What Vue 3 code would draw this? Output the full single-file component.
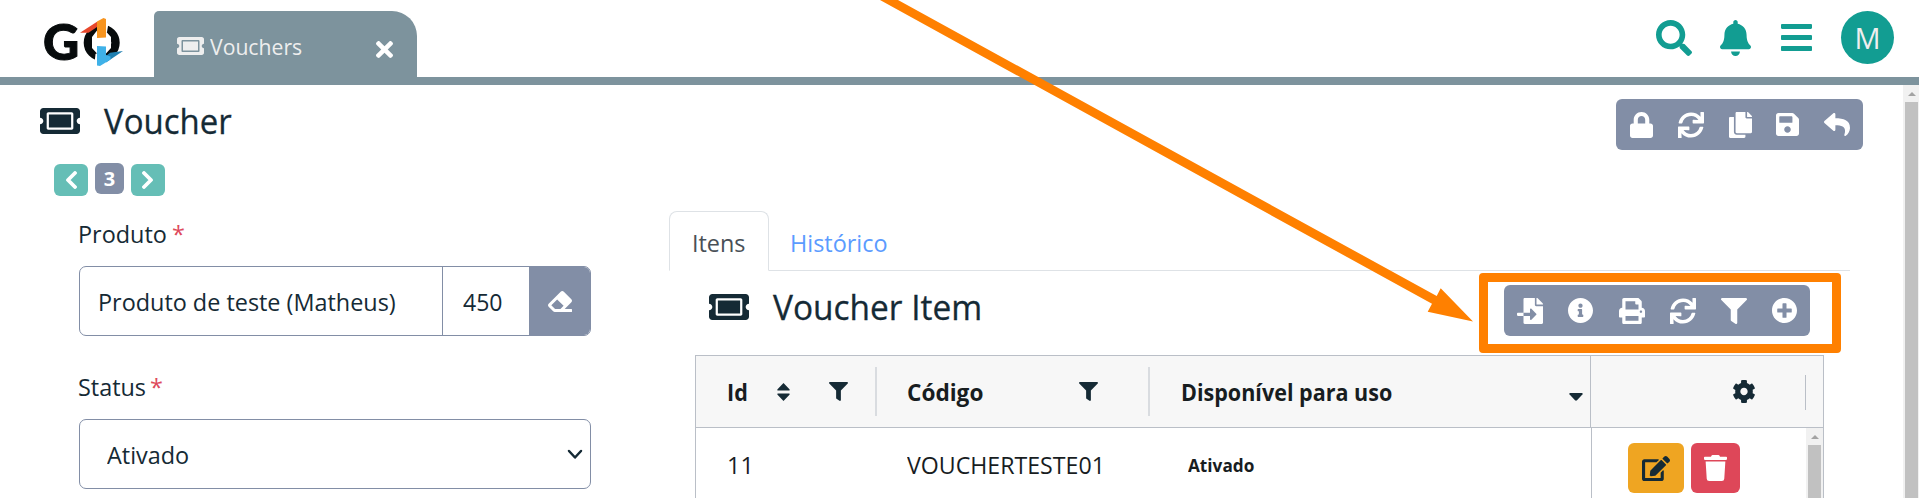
<script setup>
import { h } from 'vue'

const paths = {
  ticket: ['0 64 576 384', 'M128 160h320v192H128V160zm400 96c0 26.51 21.49 48 48 48v96c0 26.51-21.49 48-48 48H48c-26.51 0-48-21.49-48-48v-96c26.51 0 48-21.49 48-48s-21.49-48-48-48v-96c0-26.51 21.49-48 48-48h480c26.51 0 48 21.49 48 48v96c-26.51 0-48 21.49-48 48zm-48-104c0-13.255-10.745-24-24-24H120c-13.255 0-24 10.745-24 24v208c0 13.255 10.745 24 24 24h336c13.255 0 24-10.745 24-24V152z'],
  times: ['0 80 352 352', 'M242.72 256l100.07-100.07c12.28-12.28 12.28-32.19 0-44.48l-22.24-22.24c-12.28-12.28-32.19-12.28-44.48 0L176 189.28 75.93 89.21c-12.28-12.28-32.19-12.28-44.48 0L9.21 111.45c-12.28 12.28-12.28 32.19 0 44.48L109.28 256 9.21 356.07c-12.28 12.28-12.28 32.19 0 44.48l22.24 22.24c12.28 12.28 32.2 12.28 44.48 0L176 322.72l100.07 100.07c12.28 12.28 32.2 12.28 44.48 0l22.24-22.24c12.28-12.28 12.28-32.19 0-44.48L242.72 256z'],
  search: ['0 0 512 512', 'M505 442.7L405.3 343c-4.5-4.5-10.6-7-17-7H372c27.6-35.3 44-79.7 44-128C416 93.1 322.9 0 208 0S0 93.1 0 208s93.1 208 208 208c48.3 0 92.7-16.4 128-44v16.3c0 6.4 2.5 12.5 7 17l99.7 99.7c9.4 9.4 24.6 9.4 33.9 0l28.3-28.3c9.4-9.4 9.4-24.6.1-34zM208 336c-70.7 0-128-57.2-128-128 0-70.7 57.2-128 128-128 70.7 0 128 57.2 128 128 0 70.7-57.2 128-128 128z'],
  bell: ['0 0 448 512', 'M224 512c35.32 0 63.97-28.65 63.97-64H160.03c0 35.35 28.65 64 63.97 64zm215.39-149.71c-19.32-20.76-55.47-51.99-55.47-154.29 0-77.7-54.48-139.9-127.94-155.16V32c0-17.67-14.32-32-31.98-32s-31.98 14.33-31.98 32v20.84C118.56 68.1 64.08 130.3 64.08 208c0 102.3-36.15 133.53-55.47 154.29-6 6.45-8.66 14.16-8.61 21.71.11 16.4 12.98 32 32.1 32h383.8c19.12 0 32-15.6 32.1-32 .05-7.55-2.61-15.27-8.61-21.71z'],
  bars: ['0 60 448 392', 'M16 132h416c8.837 0 16-7.163 16-16V76c0-8.837-7.163-16-16-16H16C7.163 60 0 67.163 0 76v40c0 8.837 7.163 16 16 16zm0 160h416c8.837 0 16-7.163 16-16v-40c0-8.837-7.163-16-16-16H16c-8.837 0-16 7.163-16 16v40c0 8.837 7.163 16 16 16zm0 160h416c8.837 0 16-7.163 16-16v-40c0-8.837-7.163-16-16-16H16c-8.837 0-16 7.163-16 16v40c0 8.837 7.163 16 16 16z'],
  lock: ['0 0 448 512', 'M400 224h-24v-72C376 68.2 307.8 0 224 0S72 68.2 72 152v72H48c-26.5 0-48 21.5-48 48v192c0 26.5 21.5 48 48 48h352c26.5 0 48-21.5 48-48V272c0-26.5-21.5-48-48-48zm-104 0H152v-72c0-39.7 32.3-72 72-72s72 32.3 72 72v72z'],
  sync: ['0 0 512 512', 'M440.65 12.57l4 82.77A247.16 247.16 0 0 0 255.83 8C134.73 8 33.91 94.92 12.29 209.82A12 12 0 0 0 24.09 224h49.05a12 12 0 0 0 11.67-9.26 175.91 175.91 0 0 1 317-56.94l-101.46-4.86a12 12 0 0 0-12.57 12v47.41a12 12 0 0 0 12 12H500a12 12 0 0 0 12-12V12a12 12 0 0 0-12-12h-47.37a12 12 0 0 0-11.98 12.57zM255.83 432a175.61 175.61 0 0 1-146-77.8l101.8 4.87a12 12 0 0 0 12.57-12v-47.4a12 12 0 0 0-12-12H12a12 12 0 0 0-12 12V500a12 12 0 0 0 12 12h47.35a12 12 0 0 0 12-12.6l-4.15-82.57A247.17 247.17 0 0 0 255.83 504c121.11 0 221.93-86.92 243.55-201.82a12 12 0 0 0-11.8-14.18h-49.05a12 12 0 0 0-11.67 9.26A175.86 175.86 0 0 1 255.83 432z'],
  copy: ['0 0 448 512', 'M320 448v40c0 13.255-10.745 24-24 24H24c-13.255 0-24-10.745-24-24V120c0-13.255 10.745-24 24-24h72v296c0 30.879 25.121 56 56 56h168zm0-344V0H152c-13.255 0-24 10.745-24 24v368c0 13.255 10.745 24 24 24h272c13.255 0 24-10.745 24-24V128H344c-13.2 0-24-10.8-24-24zm120.971-31.029L375.029 7.029A24 24 0 0 0 358.059 0H352v96h96v-6.059a24 24 0 0 0-7.029-16.97z'],
  save: ['0 32 448 448', 'M433.941 129.941l-83.882-83.882A48 48 0 0 0 316.118 32H48C21.49 32 0 53.49 0 80v352c0 26.51 21.49 48 48 48h352c26.51 0 48-21.49 48-48V163.882a48 48 0 0 0-14.059-33.941zM224 416c-35.346 0-64-28.654-64-64 0-35.346 28.654-64 64-64s64 28.654 64 64c0 35.346-28.654 64-64 64zm96-304.52V212c0 6.627-5.373 12-12 12H76c-6.627 0-12-5.373-12-12V108c0-6.627 5.373-12 12-12h228.52c3.183 0 6.235 1.264 8.485 3.515l3.48 3.48A11.996 11.996 0 0 1 320 111.48z'],
  reply: ['0 32 512 448', 'M8.309 189.836L184.313 37.851C199.719 24.546 224 35.347 224 56.015v80.053c160.629 1.839 288 34.032 288 186.258 0 61.441-39.581 122.309-83.333 154.132-13.653 9.931-33.111-2.533-28.077-18.631 45.344-145.012-21.507-183.51-176.59-185.742V360c0 20.7-24.3 31.453-39.687 18.164l-176.004-152c-11.071-9.562-11.086-26.753 0-36.328z'],
  import: ['0 0 512 512', 'M16 288c-8.8 0-16 7.2-16 16v32c0 8.8 7.2 16 16 16h112v-64zm489-183L407.1 7c-4.5-4.5-10.6-7-17-7H384v128h128v-6.1c0-6.3-2.5-12.4-7-16.9zm-153 31V0H152c-13.3 0-24 10.7-24 24v264h128v-65.2c0-14.3 17.3-21.4 27.4-11.3L379 308c6.6 6.7 6.6 17.4 0 24l-95.7 96.4c-10.1 10.1-27.4 3-27.4-11.3V352H128v136c0 13.3 10.7 24 24 24h336c13.3 0 24-10.7 24-24V160H376c-13.2 0-24-10.8-24-24z'],
  info: ['8 8 496 496', 'M256 8C119.043 8 8 119.083 8 256c0 136.997 111.043 248 248 248s248-111.003 248-248C504 119.083 392.957 8 256 8zm0 110c23.196 0 42 18.804 42 42s-18.804 42-42 42-42-18.804-42-42 18.804-42 42-42zm56 254c0 6.627-5.373 12-12 12h-88c-6.627 0-12-5.373-12-12v-24c0-6.627 5.373-12 12-12h12v-64h-12c-6.627 0-12-5.373-12-12v-24c0-6.627 5.373-12 12-12h64c6.627 0 12 5.373 12 12v100h12c6.627 0 12 5.373 12 12v24z'],
  print: ['0 0 512 512', 'M448 192V77.25c0-8.49-3.37-16.62-9.37-22.63L393.37 9.37c-6-6-14.14-9.37-22.63-9.37H96C78.33 0 64 14.33 64 32v160c-35.35 0-64 28.65-64 64v112c0 8.84 7.16 16 16 16h48v96c0 17.67 14.33 32 32 32h320c17.67 0 32-14.33 32-32v-96h48c8.84 0 16-7.16 16-16V256c0-35.35-28.65-64-64-64zm-64 256H128v-96h256v96zm0-224H128V64h192v48c0 8.84 7.16 16 16 16h48v96zm48 72c-13.25 0-24-10.75-24-24 0-13.26 10.75-24 24-24s24 10.74 24 24c0 13.25-10.75 24-24 24z'],
  filter: ['0 0 512 512', 'M487.976 0H24.028C2.71 0-8.047 25.866 7.058 40.971L192 225.941V432c0 7.831 3.821 15.17 10.237 19.662l80 55.98C298.02 518.69 320 507.493 320 487.98V225.941l184.947-184.97C520.021 25.896 509.338 0 487.976 0z'],
  plus: ['8 8 496 496', 'M256 8C119 8 8 119 8 256s111 248 248 248 248-111 248-248S393 8 256 8zm144 276c0 6.6-5.4 12-12 12h-92v92c0 6.6-5.4 12-12 12h-56c-6.6 0-12-5.4-12-12v-92h-92c-6.6 0-12-5.4-12-12v-56c0-6.6 5.4-12 12-12h92v-92c0-6.6 5.4-12 12-12h56c6.6 0 12 5.4 12 12v92h92c6.6 0 12 5.4 12 12v56z'],
  cog: ['16 8 480 496', 'M487.4 315.7l-42.6-24.6c4.3-23.2 4.3-47 0-70.2l42.6-24.6c4.9-2.8 7.1-8.6 5.5-14-11.1-35.6-30-67.8-54.7-94.6-3.8-4.1-10-5.1-14.8-2.3L380.8 110c-17.9-15.4-38.5-27.3-60.8-35.1V25.8c0-5.6-3.9-10.5-9.4-11.7-36.7-8.2-74.3-7.8-109.2 0-5.5 1.2-9.4 6.1-9.4 11.7V75c-22.2 7.9-42.8 19.8-60.8 35.1L88.7 85.5c-4.9-2.8-11-1.9-14.8 2.3-24.7 26.7-43.6 58.9-54.7 94.6-1.7 5.4.6 11.2 5.5 14L67.3 221c-4.3 23.2-4.3 47 0 70.2l-42.6 24.6c-4.9 2.8-7.1 8.6-5.5 14 11.1 35.6 30 67.8 54.7 94.6 3.8 4.1 10 5.1 14.8 2.3l42.6-24.6c17.9 15.4 38.5 27.3 60.8 35.1v49.2c0 5.6 3.9 10.5 9.4 11.7 36.7 8.2 74.3 7.8 109.2 0 5.5-1.2 9.4-6.1 9.4-11.7v-49.2c22.2-7.9 42.8-19.8 60.8-35.1l42.6 24.6c4.9 2.8 11 1.9 14.8-2.3 24.7-26.7 43.6-58.9 54.7-94.6 1.5-5.5-.7-11.3-5.6-14.1zM256 336c-44.1 0-80-35.9-80-80s35.9-80 80-80 80 35.9 80 80-35.9 80-80 80z'],
  eraser: ['0 32 512 448', 'M497.941 273.941c18.745-18.745 18.745-49.137 0-67.882l-160-160c-18.745-18.745-49.136-18.746-67.883 0l-256 256c-18.745 18.745-18.745 49.137 0 67.882l96 96A48.004 48.004 0 0 0 144 480h356c6.627 0 12-5.373 12-12v-40c0-6.627-5.373-12-12-12H355.883l142.058-142.059zm-302.627-62.627l137.373 137.373L265.373 416H150.628l-80-80 124.686-124.686z'],
  edit: ['0 0 576 512', 'M402.6 83.2l90.2 90.2c3.8 3.8 3.8 10 0 13.8L274.4 405.6l-92.8 10.3c-12.4 1.4-22.9-9.1-21.5-21.5l10.3-92.8L388.8 83.2c3.8-3.8 10-3.8 13.8 0zm162-22.9l-48.8-48.8c-15.2-15.2-39.9-15.2-55.2 0l-35.4 35.4c-3.8 3.8-3.8 10 0 13.8l90.2 90.2c3.8 3.8 10 3.8 13.8 0l35.4-35.4c15.2-15.3 15.2-40 0-55.2zM384 346.2V448H64V128h229.8c3.2 0 6.2-1.3 8.5-3.5l40-40c7.6-7.6 2.2-20.5-8.5-20.5H48C21.5 64 0 85.5 0 112v352c0 26.5 21.5 48 48 48h352c26.5 0 48-21.5 48-48V306.2c0-10.7-12.9-16-20.5-8.5l-40 40c-2.2 2.3-3.5 5.3-3.5 8.5z'],
  trash: ['0 0 448 512', 'M432 32H312l-9.4-18.7A24 24 0 0 0 281.1 0H166.8a23.72 23.72 0 0 0-21.4 13.3L136 32H16A16 16 0 0 0 0 48v32a16 16 0 0 0 16 16h416a16 16 0 0 0 16-16V48a16 16 0 0 0-16-16zM53.2 467a48 48 0 0 0 47.9 45h245.8a48 48 0 0 0 47.9-45L416 128H32z'],
}

const Icon = (props) =>
  h('svg', { viewBox: paths[props.name][0], width: props.w, height: props.h, preserveAspectRatio: 'none', fill: 'currentColor' },
    [h('path', { d: paths[props.name][1] })])
Icon.props = ['name', 'w', 'h']

const pageActions = [
  ['lock', 23, 26], ['sync', 26, 26], ['copy', 23, 26], ['save', 23, 23], ['reply', 26, 23],
]
const gridActions = [
  ['import', 26, 26], ['info', 25, 25], ['print', 26, 26], ['sync', 26, 26], ['filter', 26, 26], ['plus', 25, 25],
]
</script>

<template>
  <div class="page">
    <header class="topbar">
      <div class="logo">
        <span class="logo-letter">G</span>
        <svg class="logo-ring" viewBox="36 0 46 52" width="46" height="52">
          <circle cx="58.700" cy="24.700" r="13.800" fill="none" stroke="#070b0c" stroke-width="8.400" />
          <path d="M63 5h2.500l-1.500 9-1 1zM51.500 45l1-9 2-1v12z" fill="#fff" />
          <path d="M54 12.500V20l9-.5v-6l5 5.500v11l-5 5.500v-7l-9-.5v7.500L49 30V19z" fill="#fff" />
          <path d="M37 14.700L54 3.700V9l-8.500 5.700z" fill="#e8472b" />
          <path d="M54 3.500L60.500 0 63 1v18.500l-9 .5z" fill="#f7941f" />
          <path d="M67 34.700L80 33 63 44.500V38z" fill="#1f7fb0" />
          <path d="M54 28l9 .5V37l4.500 1.500v3L57 48l-3-.5z" fill="#3fb1e8" />
        </svg>
      </div>
      <div class="tab">
        <Icon name="ticket" w="27" h="18" />
        <span class="t tab-name">Vouchers</span>
        <Icon class="tab-close" name="times" w="17" h="17" />
      </div>
      <nav class="top-icons">
        <Icon name="search" w="36" h="36" />
        <Icon class="bell" name="bell" w="31" h="36" />
        <Icon class="bars" name="bars" w="31" h="27" />
        <div class="avatar">M</div>
      </nav>
    </header>

    <div class="body">
      <main class="content">
        <div class="title-row">
          <Icon name="ticket" w="40" h="26" />
          <h1 class="t">Voucher</h1>
          <div class="toolbar page-tools">
            <Icon v-for="a in pageActions" :key="a[0]" :name="a[0]" :w="a[1]" :h="a[2]" />
          </div>
        </div>

        <div class="pager">
          <button class="step"><svg width="12" height="18" viewBox="0 0 12 18"><path d="M10 2L3 9l7 7" /></svg></button>
          <span class="count">3</span>
          <button class="step"><svg width="12" height="18" viewBox="0 0 12 18"><path d="M2 2l7 7-7 7" /></svg></button>
        </div>

        <div class="columns">
          <section class="form">
            <label><span class="t produto">Produto</span><span class="t star">*</span></label>
            <div class="field">
              <div class="name"><span class="t product">Produto de teste (Matheus)</span></div>
              <div class="code"><span class="t">450</span></div>
              <div class="erase"><Icon name="eraser" w="24" h="21" /></div>
            </div>
            <label class="second"><span class="t status">Status</span><span class="t star">*</span></label>
            <div class="field select">
              <span class="t">Ativado</span>
              <svg width="16" height="11" viewBox="0 0 16 11"><path d="M2 2l6 6.500 6-6.500" /></svg>
            </div>
          </section>

          <section class="detail">
            <div class="tabs">
              <div class="active"><span class="t">Itens</span></div>
              <div class="link"><span class="t">Histórico</span></div>
            </div>
            <div class="sub-row">
              <Icon name="ticket" w="40" h="26" />
              <h2 class="t">Voucher Item</h2>
              <div class="frame">
                <div class="toolbar">
                  <span v-for="a in gridActions" :key="a[0]"><Icon :name="a[0]" :w="a[1]" :h="a[2]" /></span>
                </div>
              </div>
            </div>
            <div class="grid">
              <div class="head">
                <div class="c-id">
                  <span class="t">Id</span>
                  <svg class="sort" width="13" height="18" viewBox="0 0 12 18" preserveAspectRatio="none"><path d="M6 0l5.500 6.200c.5.700.2 1.300-.6 1.300H1.100c-.8 0-1.100-.6-.6-1.300zM6 18l5.500-6.200c.5-.7.200-1.300-.6-1.300H1.100c-.8 0-1.100.6-.6 1.300z" /></svg>
                  <Icon class="filter" name="filter" w="19" h="19" />
                </div>
                <div class="c-code">
                  <span class="t">Código</span>
                  <Icon class="filter" name="filter" w="19" h="19" />
                </div>
                <div class="c-use">
                  <span class="t">Disponível para uso</span>
                  <svg class="caret" width="14" height="8" viewBox="0 0 14 8"><path d="M1.200 0h11.600c.9 0 1.300 1 .6 1.600L8 7.300c-.6.600-1.400.6-2 0L.6 1.600C-.1 1 .3 0 1.200 0z" /></svg>
                </div>
                <div class="c-act"><Icon name="cog" w="22" h="23" /></div>
              </div>
              <div class="row">
                <div class="c-id"><span class="t">11</span></div>
                <div class="c-code"><span class="t">VOUCHERTESTE01</span></div>
                <div class="c-use"><span class="t">Ativado</span></div>
                <div class="c-act">
                  <button class="edit"><Icon name="edit" w="28" h="25" /></button>
                  <button class="del"><Icon name="trash" w="23" h="26" /></button>
                </div>
                <div class="scroll"><i></i><b></b></div>
              </div>
            </div>
          </section>
        </div>
      </main>
      <div class="scroll outer"><i></i><b></b></div>
    </div>

    <svg class="arrow" width="1919" height="498" viewBox="0 0 1919 498">
      <path d="M880 0h18l538.700 296 4-7.700 32.300 33.200-45.300-9.700 4.300-8z" />
    </svg>
  </div>
</template>

<style>
body { overflow: hidden; }
</style>

<style scoped>
.page { position: relative; height: 498px; overflow: hidden; background: #fff; color: #152a35; font-family: "Open Sans", "Noto Sans", sans-serif; font-size: 24.5px; }
.page * { box-sizing: border-box; }
svg { display: block; flex: none; }
h1, h2 { margin: 0; font-weight: 500; -webkit-text-stroke: .3px currentColor; }
button { border: 0; padding: 0; color: inherit; display: flex; align-items: center; justify-content: center; }
.t { display: inline-block; white-space: nowrap; transform-origin: 0 50%; transform: scaleX(.955); }

.topbar { height: 85px; border-bottom: 8px solid #7d939d; display: flex; align-items: flex-start; }
.logo { width: 82px; height: 66px; margin: 0 0 0 43px; display: flex; align-items: flex-start; }
.logo-letter { width: 36px; line-height: 66px; margin-top: 8px; font-family: Lato, sans-serif; font-weight: 900; font-size: 50px; color: #070b0c; -webkit-text-stroke: 1px #070b0c; letter-spacing: 0; }
.logo-ring { margin-top: 18px; }
.tab { width: 263px; height: 66px; margin: 11px 0 0 29px; padding: 0 24px 0 23px; border-radius: 5px 25px 0 0; background: #7d939d; color: #eee; display: flex; align-items: center; }
.tab > svg { margin-top: 4px; }
.tab-name { margin-left: 6px; font-size: 22px; line-height: 30px; margin-top: 4px; transform: scaleX(.963); }
.tab .tab-close { margin: 11px 0 0 auto; color: #fff; }
.top-icons { margin: 11px 25px 0 auto; height: 53px; display: flex; align-items: center; color: #129d92; }
.bell { margin-left: 28px; }
.bars { margin-left: 30px; }
.avatar { width: 53px; height: 53px; margin-left: 29px; border-radius: 50%; background: #129d92; color: #eee; font-size: 29px; line-height: 53px; text-align: center; }

.body { height: 413px; display: flex; }
.content { flex: 1; min-width: 0; padding-top: 14px; }
.title-row { height: 51px; padding: 0 40px; display: flex; align-items: flex-start; }
.title-row > svg { margin-top: 9px; }
h1 { margin-left: 24px; font-size: 34.5px; line-height: 44px; transform: scaleX(.967); }
.toolbar { height: 51px; border-radius: 6px; background: #828ea6; color: #fff; display: flex; align-items: center; }
.toolbar span { width: 51px; display: flex; align-items: center; justify-content: center; }
.page-tools { width: 247px; margin-left: auto; padding: 0 13px 0 14px; justify-content: space-between; }

.pager { height: 61px; padding: 13px 0 0 54px; display: flex; align-items: flex-start; gap: 7px; }
.step { width: 34px; height: 32px; margin-top: 1px; border-radius: 6px; background: #65beb6; }
.step path, .select path { fill: none; stroke: #fff; stroke-width: 3.800; stroke-linecap: round; stroke-linejoin: round; }
.count { width: 29px; height: 31px; border-radius: 6px; background: #828ea6; color: #fff; font-weight: 700; font-size: 20px; line-height: 32px; text-align: center; }

.columns { display: flex; }
.form { width: 669px; padding-left: 79px; flex: none; }
label { display: flex; height: 44px; line-height: 45px; }
.produto { width: 94px; }
.status { width: 72px; }
.produto, .status { margin-left: -1px; }
.star { color: #de4a5c; }
.field { height: 70px; width: 512px; margin-top: 11px; border: 1px solid #828ea6; border-radius: 7px; display: flex; align-items: stretch; line-height: 69px; overflow: hidden; }
.name { width: 363px; padding-left: 18px; border-right: 1px solid #828ea6; }
.code { width: 86px; padding-left: 20px; }
.code .t { transform: scaleX(.94); }
.erase { flex: 1; background: #828ea6; color: #fff; display: flex; align-items: center; justify-content: center; }
.second { margin-top: 28px; }
.select { padding: 0 7px 0 27px; align-items: center; justify-content: space-between; }
.select path { stroke: #152a35; stroke-width: 2.500; }

.detail { width: 1181px; flex: none; }
.tabs { height: 60px; border-bottom: 1px solid #dee2e6; display: flex; line-height: 61px; }
.active { width: 100px; height: 60px; padding-left: 22px; border: 1px solid #dee2e6; border-bottom-color: #fff; border-radius: 8px 8px 0 0; color: #495057; }
.link { padding-left: 21px; color: #5b9bff; line-height: 63px; }
.sub-row { height: 84px; padding-left: 40px; display: flex; align-items: flex-start; }
.sub-row > svg { margin-top: 23px; }
h2 { margin: 14px 0 0 24px; font-size: 35px; line-height: 44px; transform: scaleX(.972); }
.frame { width: 362px; height: 80px; margin: 2px 9px 0 auto; padding: 3px 0 0 16px; border: 9px solid #ff8000; border-radius: 4px; }
.frame .toolbar { width: 306px; }

.grid { width: 1129px; height: 160px; margin-left: 26px; border: 1px solid #babfc7; border-bottom: 0; color: #181d1f; }
.head { height: 72px; background: #f7f7f7; border-bottom: 1px solid #babfc7; display: flex; font-weight: 700; font-size: 22.4px; line-height: 73px; }
.head svg { color: #152a35; fill: #152a35; }
.head > div { display: flex; }
.c-id { width: 181px; padding-left: 31px; flex: none; }
.c-code { width: 273px; padding-left: 30px; flex: none; }
.c-use { width: 441px; padding-left: 31px; flex: none; }
.head .c-id::after, .head .c-code::after { content: ""; width: 2px; height: 49px; margin: 11px 0 0 auto; background: #d9dce0; }
.head .t { transform: scaleX(.962); }
.head .c-id .t { width: 50px; }
.sort { margin-top: 27px; }
.filter { margin-top: 26px; }
.c-id .filter { margin-left: 39px; }
.head .c-code .t { width: 172px; transform: scaleX(1.01); }
.head .c-use .t { width: 388px; }
.caret { margin-top: 37px; }
.head .c-use { border-right: 1px solid #babfc7; }
.head .c-act { flex: 1; padding: 24px 0 0 142px; }
.head .c-act::after { content: ""; width: 1px; height: 35px; margin: -5px 17px 0 auto; background: #babfc7; }
.row { height: 87px; display: flex; line-height: 74px; overflow: hidden; }
.row .c-code .t { transform: scaleX(.945); }
.row .c-use { width: 442px; padding-left: 38px; border-right: 1px solid #babfc7; font-size: 18.500px; font-weight: 700; line-height: 73px; }
.row .c-use .t { transform: scaleX(.93); }
.row .c-act { flex: 1; display: flex; gap: 7px; padding: 15px 0 0 36px; }
.edit, .del { height: 50px; border-radius: 6px; }
.edit { width: 56px; background: #efa522; color: #152a35; }
.del { width: 49px; background: #de4759; color: #fff; }

.scroll { width: 17px; flex: none; background: #f1f1f1; padding: 7px 2px 0; }
.scroll i { display: block; width: 0; margin: 0 auto; border: 4px solid transparent; border-top: 0; border-bottom-color: #a3a3a3; }
.scroll b { display: block; height: 420px; margin-top: 6px; background: #c1c1c1; }
.outer { width: 16px; padding: 7px 1px 0 2px; }

.arrow { position: absolute; left: 0; top: 0; fill: #ff8000; pointer-events: none; }
</style>
